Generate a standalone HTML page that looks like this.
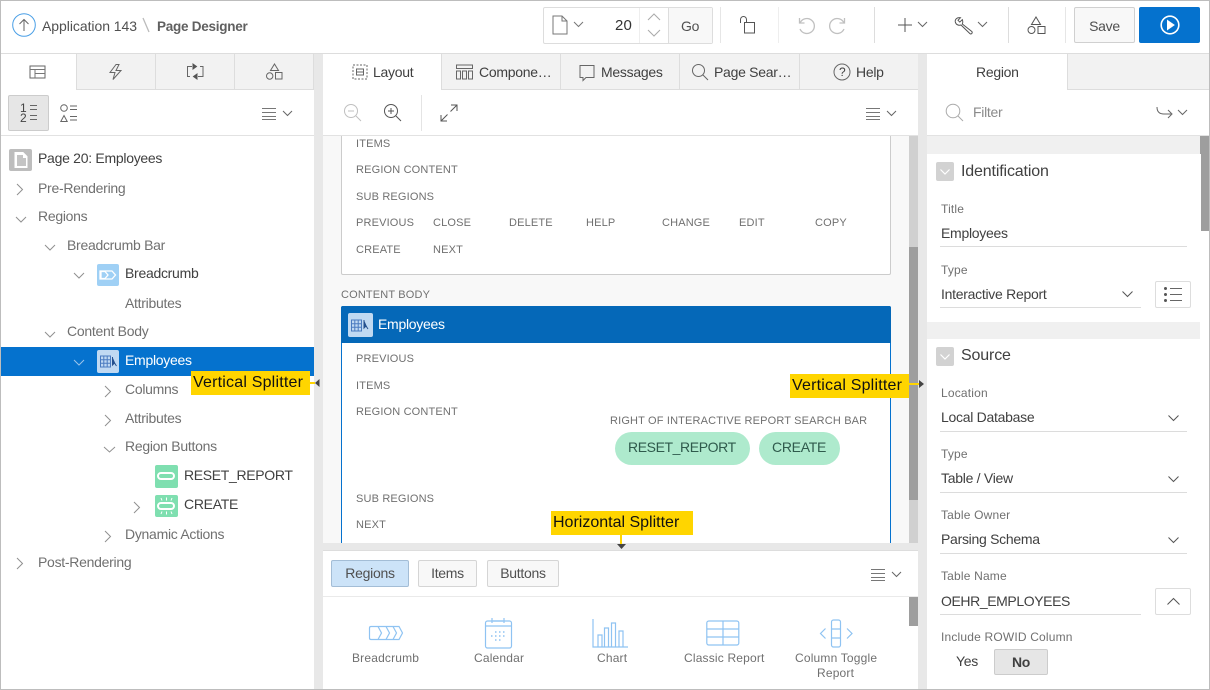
<!DOCTYPE html>
<html><head><meta charset="utf-8"><style>
html,body{margin:0;padding:0;background:#fff}
#p{position:relative;width:1210px;height:690px;overflow:hidden;background:#fff;font-family:"Liberation Sans",sans-serif;color:#404040;font-size:14px;letter-spacing:-.28px}
.t{position:absolute;white-space:nowrap;line-height:16px}
.b{position:absolute;box-sizing:border-box}
svg{position:absolute;overflow:visible;fill:none;stroke:#666;stroke-width:1}
.g{color:#707070}.d{color:#404040}
.l{font-size:11px;color:#707070;letter-spacing:.16px;line-height:14px;margin-top:1px}
.f{font-size:12px;color:#707070;line-height:14px;letter-spacing:.18px}
.v{font-size:14px;color:#404040}
.u{position:absolute;height:1px;background:#dcdcdc}
.y{position:absolute;background:#ffd500;color:#111;font-size:16px;line-height:24px;white-space:nowrap;box-sizing:border-box;padding-left:2px;letter-spacing:0}
.tab{position:absolute;top:54px;height:36px;background:#f2f2f2;border-bottom:1px solid #ddd;border-right:1px solid #ddd;box-sizing:border-box}
.btn{position:absolute;box-sizing:border-box;background:#f8f8f8;border:1px solid #d5d5d5;border-radius:2px;text-align:center}
</style></head><body><div id="p">

<!-- splitters -->
<div class="b" style="left:314px;top:54px;width:9px;height:636px;background:#e8e8e8"></div>
<div class="b" style="left:918px;top:54px;width:9px;height:636px;background:#e8e8e8"></div>
<div class="b" style="left:323px;top:543px;width:595px;height:8px;background:#e8e8e8;border-bottom:1px solid #ddd"></div>

<!-- header -->
<div class="b" style="left:0;top:53px;width:1210px;height:1px;background:#ddd"></div>
<svg style="left:12px;top:13px" width="24" height="24"><circle cx="12" cy="12" r="11.300" stroke="#4a9fe6"/><path d="M12 18V6.500M7.500 11L12 6.500 16.500 11" stroke="#666"/></svg>
<div class="t" style="left:42px;top:18px;color:#505050;letter-spacing:-.05px">Application 143</div>
<svg style="left:142px;top:17px" width="8" height="16"><path d="M1 1L7 15" stroke="#bbb" stroke-width="1.300"/></svg>
<div class="t" style="left:157px;top:19px;font-weight:bold;color:#606060;font-size:13.500px;letter-spacing:-.25px">Page Designer</div>

<div class="b" style="left:543px;top:7px;width:170px;height:37px;border:1px solid #ddd;border-radius:2px"></div>
<div class="b" style="left:639px;top:8px;width:1px;height:35px;background:#eee"></div>
<div class="b" style="left:668px;top:8px;width:44px;height:35px;background:#f8f8f8;border-left:1px solid #ddd"></div>
<svg style="left:549px;top:15px" width="40" height="20"><path d="M4 1h9l5 5v13H4z M13 1v5h5" stroke="#777"/><path d="M25 7l4.500 4.500L34 7" stroke="#777"/></svg>
<div class="t" style="left:615px;top:18px;font-size:15px;color:#333;letter-spacing:.1px">20</div>
<svg style="left:647px;top:11px" width="14" height="30"><path d="M1 9l6-6 6 6M1 19l6 6 6-6" stroke="#aaa"/></svg>
<div class="t" style="left:681px;top:18px;color:#505050">Go</div>
<svg style="left:740px;top:16px" width="18" height="18"><rect x="4.500" y="6.500" width="10" height="10.500" stroke="#555"/><path d="M.500 7V3.500a3 3 0 0 1 6 0v3" stroke="#555"/></svg>
<svg style="left:797px;top:15px" width="60" height="20"><path d="M2.500 3v5h5M3 8a7.500 7.500 0 1 1 0 6" stroke="#c0c0c0" stroke-width="1.300"/><path d="M47.500 3v5h-5M47 8a7.500 7.500 0 1 0 0 6" stroke="#c0c0c0" stroke-width="1.300"/></svg>
<svg style="left:896px;top:15px" width="36" height="20"><path d="M9 3v14M2 10h14" stroke="#555"/><path d="M22 7l4.500 4.500L31 7" stroke="#666"/></svg>
<svg style="left:953px;top:15px" width="38" height="22"><path d="M7.500 2.700L5 5.300 6.800 7.100 9.300 4.600C10 6.500 9.800 8 9.300 9L18.800 16.500C20.100 17.800 18.100 19.800 16.800 18.500L8 10C6 10.700 3 10 2.300 7C1.800 4.500 4 2 7.500 2.700z" stroke="#555"/><path d="M25 7l4.500 4.500L34 7" stroke="#666"/></svg>
<svg style="left:1027px;top:16px" width="20" height="20"><path d="M9 1l4.500 7.500h-9z M11 10.500h7v7h-7z" stroke="#555"/><circle cx="4.500" cy="14" r="3.500" stroke="#555"/></svg>
<div class="b" style="left:720px;top:7px;width:1px;height:36px;background:#e6e6e6"></div>
<div class="b" style="left:778px;top:7px;width:1px;height:36px;background:#eee"></div>
<div class="b" style="left:874px;top:7px;width:1px;height:36px;background:#ddd"></div>
<div class="b" style="left:1008px;top:7px;width:1px;height:36px;background:#ddd"></div>
<div class="b" style="left:1065px;top:7px;width:1px;height:36px;background:#e6e6e6"></div>
<div class="btn" style="left:1074px;top:7px;width:61px;height:36px;line-height:36px;color:#505050;font-size:14px;border-color:#d0d0d0">Save</div>
<div class="b" style="left:1139px;top:7px;width:61px;height:36px;background:#0572ce;border-radius:2px"></div>
<svg style="left:1160px;top:15px" width="20" height="20"><circle cx="10" cy="10" r="8.800" stroke="#fff" stroke-width="1.600"/><path d="M7.500 5.500L14 10l-6.500 4.500z" fill="#fff" stroke="#fff"/></svg>

<!-- left tabs -->
<div class="tab" style="left:76px;width:80px;border-left:1px solid #ddd"></div>
<div class="tab" style="left:156px;width:79px"></div>
<div class="tab" style="left:235px;width:79px"></div>
<svg style="left:29px;top:65px" width="18" height="14"><rect x="1" y="1" width="15" height="12" stroke="#666"/><path d="M1 4.500h15M6 4.500V13M6 8.500h10" stroke="#777"/></svg>
<svg style="left:107px;top:63px" width="18" height="18"><path d="M9 1.500L3 9.500h5L6 16.500l8-9h-5l3-6z" stroke="#666"/></svg>
<svg style="left:185px;top:63px" width="20" height="18"><path d="M7 3.500H2.500v10H5M13 13.500h5v-10h-3" stroke="#666"/><path d="M8 1l3.500 2.500L8 6z M12 11l-3.500 2.500L12 16z" fill="#555" stroke="#555"/></svg>
<svg style="left:265px;top:63px" width="18" height="18"><path d="M9.500 1l4 6.500h-8z M10.500 9.500h6.500v6.500h-6.500z" stroke="#666"/><circle cx="4.700" cy="13" r="3.200" stroke="#666"/></svg>

<!-- left toolbar -->
<div class="b" style="left:8px;top:95px;width:41px;height:36px;background:#e6e6e6;border:1px solid #ccc;border-radius:2px"></div>
<div class="t" style="left:20px;top:103px;font-size:12px;line-height:10px;color:#444;letter-spacing:0">1<br>2</div>
<svg style="left:29px;top:104px" width="10" height="18"><path d="M1 1.500h7M1 5.500h7M1 11.500h7M1 15.500h7" stroke="#666"/></svg>
<svg style="left:59px;top:103px" width="20" height="20"><circle cx="5" cy="5" r="3.300" stroke="#666"/><path d="M5 12.500l3.200 6h-6.400z" stroke="#666"/><path d="M11 3h7M11 6.500h7M11 13.500h7M11 17h7" stroke="#666"/></svg>
<svg style="left:262px;top:107px" width="32" height="14"><path d="M0 1.500h14M0 5.500h14M0 9.500h14M0 12.500h14" stroke="#777"/><path d="M21 4l4.500 4.500L30 4" stroke="#666"/></svg>
<div class="b" style="left:1px;top:135px;width:313px;height:1px;background:#e2e2e2"></div>

<!-- tree -->
<div class="b" style="left:9px;top:149px;width:23px;height:22px;background:#bdbdbd;border-radius:2px"></div>
<svg style="left:14px;top:152px" width="14" height="16"><path d="M1 .500h8l4 4v11H1z" fill="#fff" stroke="#fff"/><path d="M3 3h6v3h3v8H3z" fill="#c4c4c4" stroke="none"/></svg>
<div class="t d" style="left:38px;top:150px">Page 20: Employees</div>
<div class="t g" style="left:38px;top:180px">Pre-Rendering</div>
<div class="t g" style="left:38px;top:208px">Regions</div>
<div class="t g" style="left:67px;top:237px">Breadcrumb Bar</div>
<div class="t d" style="left:125px;top:265px">Breadcrumb</div>
<div class="t g" style="left:125px;top:295px">Attributes</div>
<div class="t g" style="left:67px;top:323px">Content Body</div>
<div class="b" style="left:1px;top:347px;width:313px;height:29px;background:#0572ce"></div>
<div class="t" style="left:125px;top:352px;color:#fff">Employees</div>
<div class="t g" style="left:125px;top:381px">Columns</div>
<div class="t g" style="left:125px;top:410px">Attributes</div>
<div class="t g" style="left:125px;top:438px">Region Buttons</div>
<div class="t d" style="left:184px;top:467px;letter-spacing:-.33px">RESET_REPORT</div>
<div class="t d" style="left:184px;top:496px">CREATE</div>
<div class="t g" style="left:125px;top:526px">Dynamic Actions</div>
<div class="t g" style="left:38px;top:554px">Post-Rendering</div>

<svg style="left:0;top:0" width="314" height="600">
<g stroke="#909090">
<path d="M17 184l5.500 5.500L17 195M17 558l5.500 5.500L17 569"/>
<path d="M16 217l5 5 5-5M45 245l5 5 5-5M74 273l5 5 5-5M45 332l5 5 5-5"/>
<path d="M105 386l5.500 5.500L105 397M105 415l5.500 5.500L105 426M105 531l5.500 5.500L105 542M134 502l5.500 5.500L134 513"/>
<path d="M104 447l5.500 5 5.500-5"/>
</g>
<path d="M74 360l5 5 5-5" stroke="#9cc4ea"/>
</svg>

<div class="b" style="left:97px;top:264px;width:22px;height:22px;background:#9fd0f5;border-radius:2px"></div>
<svg style="left:99px;top:270px" width="18" height="10"><path d="M1 1h12l3.500 4-3.500 4H1z" stroke="#fff" stroke-width="1.300"/><path d="M6 1.500l3 3.500-3 3.500H2V1.500z" stroke="#fff" stroke-width="1.300"/></svg>
<div class="b" style="left:97px;top:350px;width:22px;height:23px;background:#c0d9f2;border-radius:2px"></div>
<svg style="left:100px;top:355px" width="18" height="13"><path d="M.500 1h10v11H.500zM.500 4.700h10M.500 8.300h10M3.800 1v11M7.200 1v11" stroke="#4a7bc0"/><path d="M12.500 2v8l2-2 2 3" stroke="#25508e" fill="#25508e"/></svg>
<div class="b" style="left:155px;top:465px;width:23px;height:23px;background:#7fdfb0;border-radius:2px"></div>
<div class="b" style="left:157px;top:472px;width:18px;height:8px;border:2px solid #fff;border-radius:4px"></div>
<div class="b" style="left:155px;top:495px;width:23px;height:22px;background:#7fdfb0;border-radius:2px"></div>
<div class="b" style="left:157px;top:502px;width:18px;height:8px;border:2px solid #fff;border-radius:4px"></div>
<svg style="left:158px;top:497px" width="17" height="18"><path d="M3 1l1 2.500M8.500 .500v3M14 1l-1 2.500M3 17l1-2.500M8.500 17.500v-3M14 17l-1-2.500" stroke="#fff"/></svg>

<!-- left splitter annotation -->
<div class="y" style="left:191px;top:371px;width:119px;letter-spacing:.2px">Vertical Splitter</div>
<div class="b" style="left:310px;top:382px;width:5px;height:2px;background:#ffd500"></div>
<svg style="left:315px;top:379px" width="5" height="8"><path d="M4.500 0v8L0 4z" fill="#444" stroke="none"/></svg>

<!-- middle tabs -->
<div class="tab" style="left:441px;width:120px;border-left:1px solid #ddd"></div>
<div class="tab" style="left:561px;width:119px"></div>
<div class="tab" style="left:680px;width:120px"></div>
<div class="tab" style="left:800px;width:118px;border-right:none"></div>
<svg style="left:352px;top:64px" width="16" height="16"><rect x="1" y="1" width="14" height="14" stroke="#666" stroke-dasharray="2 1.500"/><path d="M4.500 5h7v6h-7zM4.500 8h7" stroke="#666"/></svg>
<div class="t d" style="left:373px;top:64px">Layout</div>
<svg style="left:456px;top:64px" width="18" height="16"><path d="M.500 1h16v3.500H.500zM.500 7h4v8h-4zM6.500 7h4v8h-4zM12.500 7h4v8h-4z" stroke="#666"/></svg>
<div class="t d" style="left:479px;top:64px">Compone…</div>
<svg style="left:579px;top:64px" width="18" height="18"><path d="M1 1.500h14v12H7l-3 3v-3H1z" stroke="#666"/></svg>
<div class="t d" style="left:601px;top:64px">Messages</div>
<svg style="left:691px;top:63px" width="18" height="18"><circle cx="7.500" cy="7.500" r="6" stroke="#666"/><path d="M12 12l5 5" stroke="#666"/></svg>
<div class="t d" style="left:714px;top:64px">Page Sear…</div>
<svg style="left:833px;top:63px" width="18" height="18"><circle cx="9" cy="9" r="8" stroke="#666"/></svg>
<div class="t d" style="left:839px;top:65px;font-size:12px;line-height:14px">?</div>
<div class="t d" style="left:856px;top:64px">Help</div>

<!-- middle toolbar -->
<svg style="left:343px;top:103px" width="20" height="20"><circle cx="8" cy="8" r="6.500" stroke="#c0c0c0"/><path d="M5 8h6M13 13l5 5" stroke="#c0c0c0"/></svg>
<svg style="left:383px;top:103px" width="20" height="20"><circle cx="8" cy="8" r="6.500" stroke="#555"/><path d="M5 8h6M8 5v6M13 13l5 5" stroke="#555"/></svg>
<div class="b" style="left:421px;top:95px;width:1px;height:36px;background:#e4e4e4"></div>
<svg style="left:440px;top:104px" width="18" height="18"><path d="M1 17L17 1M11 1h6v6M1 11v6h6" stroke="#555"/><path d="M7.500 10.500L10.500 7.500" stroke="#fff" stroke-width="3"/></svg>
<svg style="left:866px;top:107px" width="32" height="14"><path d="M0 1.500h14M0 5.500h14M0 9.500h14M0 12.500h14" stroke="#777"/><path d="M21 4l4.500 4.500L30 4" stroke="#666"/></svg>
<div class="b" style="left:323px;top:135px;width:595px;height:1px;background:#e2e2e2"></div>

<!-- layout canvas -->
<div class="b" style="left:323px;top:136px;width:586px;height:407px;background:#f8f8f8;overflow:hidden">
 <div class="b" style="left:18px;top:-10px;width:550px;height:149px;background:#fff;border:1px solid #ccc;border-radius:2px"></div>
 <div class="b" style="left:18px;top:170px;width:550px;height:260px;background:#fff;border:1px solid #0572ce;border-radius:2px"></div>
 <div class="b" style="left:18px;top:170px;width:550px;height:37px;background:#0568b8;border-radius:2px 2px 0 0"></div>
</div>
<div class="t l" style="left:356px;top:136px">ITEMS</div>
<div class="t l" style="left:356px;top:162px">REGION CONTENT</div>
<div class="t l" style="left:356px;top:189px">SUB REGIONS</div>
<div class="t l" style="left:356px;top:215px">PREVIOUS</div>
<div class="t l" style="left:433px;top:215px">CLOSE</div>
<div class="t l" style="left:509px;top:215px">DELETE</div>
<div class="t l" style="left:586px;top:215px">HELP</div>
<div class="t l" style="left:662px;top:215px">CHANGE</div>
<div class="t l" style="left:739px;top:215px">EDIT</div>
<div class="t l" style="left:815px;top:215px">COPY</div>
<div class="t l" style="left:356px;top:242px">CREATE</div>
<div class="t l" style="left:433px;top:242px">NEXT</div>
<div class="t l" style="left:341px;top:287px">CONTENT BODY</div>
<div class="b" style="left:348px;top:313px;width:25px;height:24px;background:#c0d9f2;border-radius:2px"></div>
<svg style="left:351px;top:319px" width="20" height="13"><path d="M.500 1h10v11H.500zM.500 4.700h10M.500 8.300h10M3.800 1v11M7.200 1v11" stroke="#4a7bc0"/><path d="M13 1v8l2-2 2 3" stroke="#25508e" fill="#25508e"/></svg>
<div class="t" style="left:378px;top:316px;color:#fff">Employees</div>
<div class="t l" style="left:356px;top:351px">PREVIOUS</div>
<div class="t l" style="left:356px;top:378px">ITEMS</div>
<div class="t l" style="left:356px;top:404px">REGION CONTENT</div>
<div class="t l" style="left:610px;top:413px">RIGHT OF INTERACTIVE REPORT SEARCH BAR</div>
<div class="b" style="left:615px;top:432px;width:135px;height:33px;background:#aeeacd;border-radius:17px"></div>
<div class="t" style="left:628px;top:439px;color:#2f5a4c;letter-spacing:-.4px">RESET_REPORT</div>
<div class="b" style="left:759px;top:432px;width:81px;height:33px;background:#aeeacd;border-radius:17px"></div>
<div class="t" style="left:772px;top:439px;color:#2f5a4c">CREATE</div>
<div class="t l" style="left:356px;top:491px">SUB REGIONS</div>
<div class="t l" style="left:356px;top:517px">NEXT</div>

<!-- middle scrollbar -->
<div class="b" style="left:909px;top:136px;width:9px;height:407px;background:#d0d0d0"></div>
<div class="b" style="left:909px;top:247px;width:9px;height:253px;background:#9e9e9e"></div>

<!-- annotations -->
<div class="y" style="left:790px;top:374px;width:119px;letter-spacing:.2px">Vertical Splitter</div>
<div class="b" style="left:909px;top:383px;width:10px;height:2px;background:#ffd500"></div>
<svg style="left:919px;top:380px" width="6" height="8"><path d="M0 0v8l5-4z" fill="#444" stroke="none"/></svg>
<div class="y" style="left:551px;top:511px;width:142px">Horizontal Splitter</div>
<div class="b" style="left:620px;top:534px;width:2px;height:10px;background:#ffd500"></div>
<svg style="left:617px;top:544px" width="10" height="6"><path d="M0 0h9L4.500 5z" fill="#444" stroke="none"/></svg>

<!-- gallery -->
<div class="btn" style="left:331px;top:560px;width:78px;height:27px;line-height:25px;background:#cce3f8;border-color:#a3bdd6;color:#505050">Regions</div>
<div class="btn" style="left:418px;top:560px;width:59px;height:27px;line-height:25px;color:#505050">Items</div>
<div class="btn" style="left:487px;top:560px;width:72px;height:27px;line-height:25px;color:#505050">Buttons</div>
<svg style="left:871px;top:568px" width="32" height="14"><path d="M0 1.500h14M0 5.500h14M0 9.500h14M0 12.500h14" stroke="#777"/><path d="M21 4l4.500 4.500L30 4" stroke="#666"/></svg>
<div class="b" style="left:323px;top:596px;width:595px;height:1px;background:#eaeaea"></div>
<div class="b" style="left:909px;top:597px;width:9px;height:29px;background:#9e9e9e"></div>
<svg style="left:368px;top:625px" width="36" height="16"><g stroke="#8fc3f2" stroke-width="1.200"><path d="M1.500 3c0-1 .5-1.500 1.500-1.500h28l3.500 6.500-3.500 6.500H3c-1 0-1.500-.5-1.500-1.500z"/><path d="M10 1.500l3.500 6.500-3.500 6.500M18 1.500l3.500 6.500-3.500 6.500M25 1.500l3.500 6.500-3.500 6.500"/></g></svg>
<svg style="left:484px;top:617px" width="30" height="32"><g stroke="#8fc3f2" stroke-width="1.200"><rect x="1.500" y="4" width="26" height="27" rx="2"/><path d="M1.500 9h26M8 1v5M20 1v5M9 4h10"/><path d="M11 15h1.500M15 15h1.500M19 15h1.500M7 19h1.500M11 19h1.500M15 19h1.500M19 19h1.500M11 23h1.500M15 23h1.500" stroke-width="1.500"/></g></svg>
<svg style="left:592px;top:618px" width="36" height="32"><g stroke="#8fc3f2" stroke-width="1.200"><path d="M1 1v28h35"/><path d="M6 29V17h4v12M12.500 29V10h4v19M19.500 29V5h4v24M27 29V13h4v16"/></g></svg>
<svg style="left:706px;top:620px" width="34" height="26"><g stroke="#8fc3f2" stroke-width="1.200"><rect x=".800" y="1" width="32" height="24" rx="2"/><path d="M1 9h32M1 17h32M17 1v24"/></g></svg>
<svg style="left:819px;top:619px" width="36" height="30"><g stroke="#8fc3f2" stroke-width="1.200"><rect x="12.500" y="1" width="9" height="27" rx="2"/><path d="M12.500 10h9M12.500 19h9M6.500 9.500l-5 5 5 5M28 9.500l5 5-5 5"/></g></svg>
<div class="t f" style="left:352px;top:651px">Breadcrumb</div>
<div class="t f" style="left:474px;top:651px">Calendar</div>
<div class="t f" style="left:597px;top:651px">Chart</div>
<div class="t f" style="left:684px;top:651px">Classic Report</div>
<div class="t f" style="left:795px;top:651px">Column Toggle</div>
<div class="t f" style="left:817px;top:666px">Report</div>

<!-- right panel -->
<div class="tab" style="left:1067px;width:142px;border-left:1px solid #ddd;border-right:none"></div>
<div class="t d" style="left:976px;top:64px">Region</div>
<svg style="left:945px;top:103px" width="20" height="20"><circle cx="8" cy="8" r="6.800" stroke="#aaa"/><path d="M13 13l5 5" stroke="#aaa"/></svg>
<div class="t" style="left:973px;top:104px;color:#8a8a8a">Filter</div>
<svg style="left:1156px;top:105px" width="34" height="16"><path d="M1 2c0 5 3 7 7 7h7M12 5l4 4-4 4" stroke="#666"/><path d="M22 5l4.500 4.500L31 5" stroke="#666"/></svg>
<div class="b" style="left:927px;top:135px;width:282px;height:1px;background:#e2e2e2"></div>
<div class="b" style="left:927px;top:136px;width:273px;height:18px;background:#f0f0f0"></div>
<div class="b" style="left:927px;top:322px;width:273px;height:17px;background:#f0f0f0"></div>
<div class="b" style="left:1200px;top:136px;width:9px;height:18px;background:#9e9e9e"></div>
<div class="b" style="left:1201px;top:136px;width:8px;height:95px;background:#9e9e9e"></div>

<div class="b" style="left:936px;top:162px;width:18px;height:19px;background:#d2d2d2;border-radius:2px"></div>
<svg style="left:940px;top:169px" width="10" height="6"><path d="M.500 .500l4.500 4.500 4.500-4.500" stroke="#fff" stroke-width="1.200"/></svg>
<div class="t" style="left:961px;top:164px;font-size:16px;color:#404040;letter-spacing:-.15px">Identification</div>
<div class="t f" style="left:941px;top:202px">Title</div>
<div class="t v" style="left:941px;top:225px">Employees</div>
<div class="u" style="left:940px;top:246px;width:247px"></div>
<div class="t f" style="left:941px;top:263px">Type</div>
<div class="t v" style="left:941px;top:286px">Interactive Report</div>
<div class="u" style="left:940px;top:307px;width:201px"></div>
<svg style="left:1122px;top:291px" width="12" height="7"><path d="M.500 .500l5 5 5-5" stroke="#555"/></svg>
<div class="btn" style="left:1155px;top:281px;width:36px;height:27px;background:#fff;border-color:#ddd"></div>
<svg style="left:1163px;top:286px" width="20" height="17"><path d="M7 2.500h12M7 8.500h12M7 14.500h12" stroke="#666"/><circle cx="2.500" cy="2.500" r="1.500" fill="#555" stroke="none"/><circle cx="2.500" cy="8.500" r="1.500" fill="#555" stroke="none"/><circle cx="2.500" cy="14.500" r="1.500" fill="#555" stroke="none"/></svg>

<div class="b" style="left:936px;top:347px;width:18px;height:19px;background:#d2d2d2;border-radius:2px"></div>
<svg style="left:940px;top:354px" width="10" height="6"><path d="M.500 .500l4.500 4.500 4.500-4.500" stroke="#fff" stroke-width="1.200"/></svg>
<div class="t" style="left:961px;top:348px;font-size:16px;color:#404040;letter-spacing:-.15px">Source</div>
<div class="t f" style="left:941px;top:386px">Location</div>
<div class="t v" style="left:941px;top:409px">Local Database</div>
<div class="u" style="left:940px;top:431px;width:247px"></div>
<svg style="left:1168px;top:415px" width="12" height="7"><path d="M.500 .500l5 5 5-5" stroke="#555"/></svg>
<div class="t f" style="left:941px;top:447px">Type</div>
<div class="t v" style="left:941px;top:470px">Table / View</div>
<div class="u" style="left:940px;top:492px;width:247px"></div>
<svg style="left:1168px;top:476px" width="12" height="7"><path d="M.500 .500l5 5 5-5" stroke="#555"/></svg>
<div class="t f" style="left:941px;top:508px">Table Owner</div>
<div class="t v" style="left:941px;top:531px">Parsing Schema</div>
<div class="u" style="left:940px;top:553px;width:247px"></div>
<svg style="left:1168px;top:537px" width="12" height="7"><path d="M.500 .500l5 5 5-5" stroke="#555"/></svg>
<div class="t f" style="left:941px;top:569px">Table Name</div>
<div class="t v" style="left:941px;top:593px;letter-spacing:-.4px">OEHR_EMPLOYEES</div>
<div class="u" style="left:940px;top:614px;width:201px"></div>
<div class="btn" style="left:1155px;top:588px;width:36px;height:27px;background:#fff;border-color:#ddd"></div>
<svg style="left:1167px;top:598px" width="13" height="8"><path d="M.500 6.500l6-6 6 6" stroke="#555"/></svg>
<div class="t f" style="left:941px;top:630px">Include ROWID Column</div>
<div class="t d" style="left:956px;top:653px">Yes</div>
<div class="btn" style="left:994px;top:649px;width:54px;height:26px;line-height:24px;background:#e6e6e6;border-color:#ccc;font-weight:bold;color:#404040">No</div>

<!-- outer border -->
<div class="b" style="left:0;top:0;width:1210px;height:690px;border:1px solid #bdbdbd;pointer-events:none"></div>
</div></body></html>
